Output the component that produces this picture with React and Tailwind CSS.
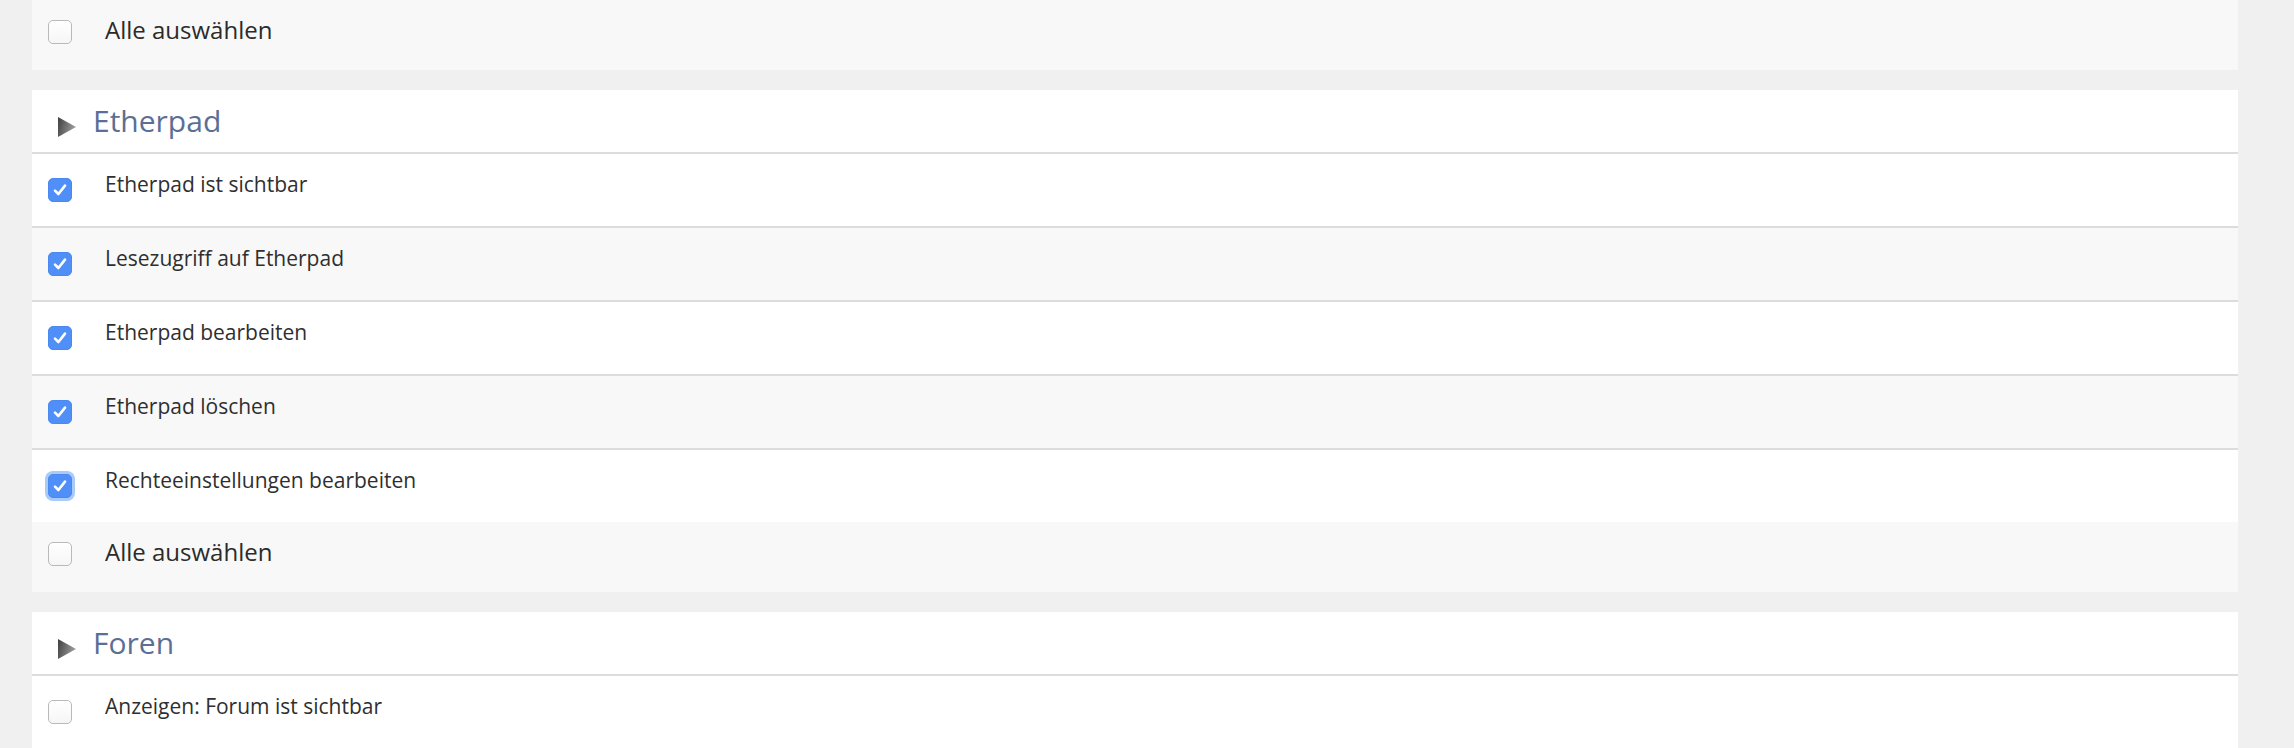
import { useState } from "react";

const sections = [
  {
    title: "Etherpad",
    rights: [
      { label: "Etherpad ist sichtbar", checked: true },
      { label: "Lesezugriff auf Etherpad", checked: true },
      { label: "Etherpad bearbeiten", checked: true },
      { label: "Etherpad löschen", checked: true },
      { label: "Rechteeinstellungen bearbeiten", checked: true, focus: true },
    ],
  },
  {
    title: "Foren",
    rights: [{ label: "Anzeigen: Forum ist sichtbar", checked: false }],
  },
];

function Checkbox({ checked, focus, onChange }) {
  return (
    <button
      type="button"
      onClick={onChange}
      className={
        "w-6 h-6 shrink-0 rounded-[5px] flex items-center justify-center " +
        (checked
          ? "bg-[#4f8ff7] border border-[#4a89f0]"
          : "bg-gradient-to-b from-white to-[#f6f6f6] border border-[#b9b9b9]") +
        (focus ? " ring-[3px] ring-[#a9cbfa]" : "")
      }
    >
      {checked && (
        <svg width="16" height="16" viewBox="0 0 16 16" fill="none">
          <path
            d="M3 8.6 L6.4 12 L13 3.6"
            stroke="white"
            strokeWidth="2.6"
            strokeLinecap="round"
            strokeLinejoin="round"
          />
        </svg>
      )}
    </button>
  );
}

function Triangle() {
  return (
    <svg width="18" height="20" viewBox="0 0 18 20" className="shrink-0">
      <defs>
        <linearGradient id="tri" x1="0" y1="0" x2="1" y2="0.3">
          <stop offset="0" stopColor="#3f3f3f" />
          <stop offset="1" stopColor="#9c9c9c" />
        </linearGradient>
      </defs>
      <polygon points="0,0 18,10 0,20" fill="url(#tri)" />
    </svg>
  );
}

function SelectAll({ checked, onChange }) {
  return (
    <div className="h-[70px] bg-[#f8f8f8] flex items-start pl-4">
      <div className="mt-5">
        <Checkbox checked={checked} onChange={onChange} />
      </div>
      <span className="ml-[33px] mt-[14px] text-[24px] leading-[32px] text-[#2b2b2b]">
        Alle auswählen
      </span>
    </div>
  );
}

function Section({ section }) {
  const [rights, setRights] = useState(section.rights);
  const [all, setAll] = useState(false);

  function toggle(i) {
    setRights(rights.map((r, idx) => (idx === i ? { ...r, checked: !r.checked } : r)));
  }

  function toggleAll() {
    setRights(rights.map((r) => ({ ...r, checked: !all })));
    setAll(!all);
  }

  return (
    <div className="mt-5">
      <div className="h-[64px] bg-white border-b-2 border-[#dcdcdc] flex items-start pl-[26px]">
        <div className="mt-[27px]">
          <Triangle />
        </div>
        <h2 className="ml-[17px] mt-[10px] text-[30px] leading-[41px] text-[#5b6f96]">
          {section.title}
        </h2>
      </div>
      {rights.map((r, i) => (
        <div
          key={r.label}
          className={
            "flex items-start pl-4 " +
            (i % 2 === 0 ? "bg-white" : "bg-[#f8f8f8]") +
            (i < rights.length - 1 ? " h-[74px] border-b-2 border-[#dcdcdc]" : " h-[72px]")
          }
        >
          <div className="mt-6">
            <Checkbox checked={r.checked} focus={r.focus} onChange={() => toggle(i)} />
          </div>
          <span className="ml-[33px] mt-[16px] text-[21px] leading-[28px] text-[#2f2f2f]">
            {r.label}
          </span>
        </div>
      ))}
      {rights.length > 1 && <SelectAll checked={all} onChange={toggleAll} />}
    </div>
  );
}

export default function App() {
  const [topAll, setTopAll] = useState(false);
  return (
    <div
      className="h-screen overflow-hidden bg-[#f0f0f0] pl-8 pr-14"
      style={{ fontFamily: '"Open Sans", "Noto Sans", sans-serif' }}
    >
      <SelectAll checked={topAll} onChange={() => setTopAll(!topAll)} />
      {sections.map((s) => (
        <Section key={s.title} section={s} />
      ))}
    </div>
  );
}
